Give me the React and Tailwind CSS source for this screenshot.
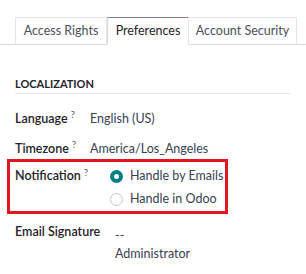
const tabs = [
  { label: 'Access Rights', w: 'w-[92px]' },
  { label: 'Preferences', w: 'w-[82px]', active: true },
  { label: 'Account Security', w: 'w-[109px]' },
]

function Label({ children }) {
  return (
    <span className="font-semibold text-[#1f2328]">
      {children}
      <sup className="ml-[3px] text-[9px] font-normal text-[#555]">?</sup>
    </span>
  )
}

function Radio({ checked, label }) {
  return (
    <div className="flex h-[23px] items-center gap-[7px] whitespace-nowrap">
      {checked ? (
        <span className="flex h-[13px] w-[13px] items-center justify-center rounded-full bg-[#017e84]">
          <span className="h-[5px] w-[5px] rounded-full bg-white" />
        </span>
      ) : (
        <span className="h-[13px] w-[13px] rounded-full border border-[#c5c8cc] bg-white" />
      )}
      <span className="text-[#374151]">{label}</span>
    </div>
  )
}

export default function App() {
  return (
    <div className="h-[274px] w-[306px] overflow-hidden bg-white text-[12.5px] text-[#374151]" style={{ fontFamily: 'Lato, sans-serif' }}>
      <div className="flex border-b border-[#d8dadd] pl-[15px] pt-[17px]">
        {tabs.map((t) => (
          <div
            key={t.label}
            className={
              'flex h-[28px] items-center justify-center border-x border-t -mb-px ' + t.w + ' ' +
              (t.active
                ? 'border-x-[#d8dadd] border-t-[#8f7b8b] border-b border-b-white bg-white text-[#1f2328]'
                : 'border-[#e3e5e8] -ml-px first:ml-0 text-[#4b5058]')
            }
          >
            {t.label}
          </div>
        ))}
      </div>

      <div className="px-[15px]">
        <div className="mt-[32px] border-b border-[#e5e7eb] pb-[2px] text-[11px] font-bold uppercase leading-[14px] text-[#1f2328]">
          Localization
        </div>

        <div className="mt-[15px] flex h-[20px] items-center">
          <div className="w-[75px]"><Label>Language</Label></div>
          <span>English (US)</span>
        </div>
        <div className="mt-[10px] flex h-[20px] items-center">
          <div className="w-[75px]"><Label>Timezone</Label></div>
          <span>America/Los_Angeles</span>
        </div>
      </div>

      <div className="ml-[7px] mt-0 flex h-[55px] w-[221px] border-[3px] border-[#e3151e] pl-[5px] pt-[3px]">
        <div className="w-[95px] pt-[2px] leading-[18px]"><Label>Notification</Label></div>
        <div className="flex flex-col">
          <Radio checked label="Handle by Emails" />
          <Radio label="Handle in Odoo" />
        </div>
      </div>

      <div className="mt-[9px] flex px-[15px]">
        <div className="w-[100px] font-semibold text-[#1f2328]">Email Signature</div>
        <div className="flex flex-col pt-[4px] leading-[18px]">
          <span>--</span>
          <span>Administrator</span>
        </div>
      </div>
    </div>
  )
}
